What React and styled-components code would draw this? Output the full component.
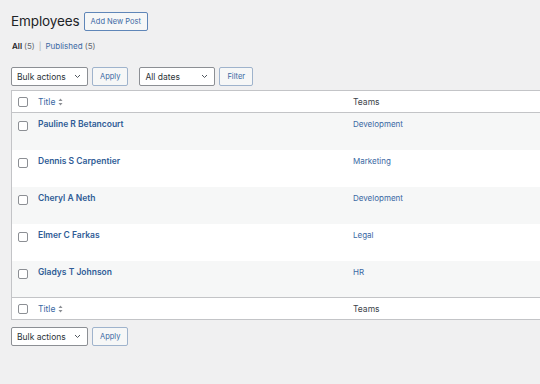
import React from 'react';
import styled, { createGlobalStyle } from 'styled-components';

const GlobalStyle = createGlobalStyle`
  html, body {
    margin: 0;
    padding: 0;
    background: #f0f0f1;
    overflow: hidden;
  }
  body {
    font-family: Inter, "Noto Sans", sans-serif;
    font-size: 9px;
    color: #3c434a;
  }
`;

const Page = styled.div`
  width: 540px;
  height: 384px;
  padding: 11px 0 0 11px;
  box-sizing: border-box;
`;

const HeaderRow = styled.div`
  display: flex;
  align-items: center;
  gap: 4px;
`;

const Heading = styled.h1`
  margin: 0;
  font-size: 13.5px;
  font-weight: 400;
  letter-spacing: -0.1px;
  color: #1d2327;
  line-height: 20px;
`;

const OutlineButton = styled.button`
  font-family: inherit;
  font-size: 7.5px;
  height: 19px;
  padding: 0 ${p => (p.$strong ? 6 : 7)}px;
  border: 1px solid ${p => (p.$strong ? '#5f86b8' : '#9fb3cc')};
  border-radius: 2px;
  background: #f6f7f7;
  color: #3a68a3;
  cursor: pointer;
  box-sizing: border-box;
`;

const Subsub = styled.ul`
  list-style: none;
  margin: 10px 0 0 1px;
  padding: 0;
  display: flex;
  gap: 4px;
  font-size: 8px;
  color: #646970;
`;

const SubItem = styled.li`
  color: ${p => (p.$current ? '#1d2327' : '#3a68a3')};
  font-weight: ${p => (p.$current ? 600 : 400)};
  span {
    color: #646970;
    font-weight: 400;
  }
`;

const Sep = styled.li`
  color: #a7aaad;
`;

const Toolbar = styled.div`
  display: flex;
  align-items: center;
  margin: ${p => (p.$top ? '16px 0 4px' : '7px 0 0')};
`;

const Group = styled.div`
  display: flex;
  align-items: center;
  gap: 4px;
  margin-right: 11px;
`;

const Select = styled.div`
  width: ${p => p.$w}px;
  height: 19px;
  box-sizing: border-box;
  border: 1px solid #8c8f94;
  border-radius: 2px;
  background: #fff;
  display: flex;
  align-items: center;
  justify-content: space-between;
  padding: 0 6px 0 5px;
  font-size: 8.5px;
  color: #2c3338;
`;

const Table = styled.table`
  width: 533px;
  border-collapse: collapse;
  border: 1px solid #c3c4c7;
  background: #fff;
  table-layout: fixed;
`;

const Row = styled.tr`
  background: ${p => (p.$alt ? '#f6f7f7' : '#fff')};
`;

const HeadCell = styled.th`
  text-align: left;
  font-weight: 400;
  height: 22px;
  padding: 0 6px;
  box-sizing: border-box;
  font-size: 8.5px;
  color: ${p => (p.$link ? '#3a68a3' : '#3c434a')};
  border-${p => (p.$foot ? 'top' : 'bottom')}: 1px solid #c3c4c7;
  vertical-align: middle;
`;

const Cell = styled.td`
  height: 37px;
  padding: 6px 6px 0;
  box-sizing: border-box;
  vertical-align: top;
  font-size: ${p => (p.$bold ? 8.5 : 8)}px;
  color: ${p => (p.$bold ? '#2f5c96' : '#3a68a3')};
  font-weight: ${p => (p.$bold ? 600 : 400)};
`;

const CheckCell = styled.td`
  width: 14px;
  padding: ${p => (p.$head ? '0' : '8px')} 0 0 6px;
  vertical-align: ${p => (p.$head ? 'middle' : 'top')};
  border-${p => (p.$foot ? 'top' : 'bottom')}: ${p => (p.$head ? '1px solid #c3c4c7' : '0')};
`;

const Check = styled.span`
  display: block;
  width: 10px;
  height: 10px;
  box-sizing: border-box;
  border: 1px solid #8c8f94;
  border-radius: 2px;
  background: #fff;
`;

const SortLabel = styled.span`
  display: inline-flex;
  align-items: center;
  gap: 3px;
`;

const Chevron = () => (
  <svg width="7" height="5" viewBox="0 0 7 5">
    <path d="M1 1l2.5 2.5L6 1" fill="none" stroke="#50575e" strokeWidth="1" />
  </svg>
);

const SortIcon = () => (
  <svg width="5" height="8" viewBox="0 0 5 8">
    <path d="M2.5 0.5L4.5 3H0.5z" fill="#8c8f94" />
    <path d="M2.5 7.5L4.5 5H0.5z" fill="#8c8f94" />
  </svg>
);

const employees = [
  ['Pauline R Betancourt', 'Development'],
  ['Dennis S Carpentier', 'Marketing'],
  ['Cheryl A Neth', 'Development'],
  ['Elmer C Farkas', 'Legal'],
  ['Gladys T Johnson', 'HR'],
];

const HeadRow = ({ foot }) => (
  <tr>
    <CheckCell as={foot ? 'td' : 'th'} $head $foot={foot}><Check /></CheckCell>
    <HeadCell $link $foot={foot} style={{ width: 315 }}>
      <SortLabel>Title <SortIcon /></SortLabel>
    </HeadCell>
    <HeadCell $foot={foot}>Teams</HeadCell>
  </tr>
);

const BulkBar = ({ top }) => (
  <Toolbar $top={top}>
    <Group>
      <Select $w={77}>Bulk actions <Chevron /></Select>
      <OutlineButton>Apply</OutlineButton>
    </Group>
    {top && (
      <Group>
        <Select $w={76}>All dates <Chevron /></Select>
        <OutlineButton>Filter</OutlineButton>
      </Group>
    )}
  </Toolbar>
);

export default function App() {
  return (
    <Page>
      <GlobalStyle />
      <HeaderRow>
        <Heading>Employees</Heading>
        <OutlineButton $strong>Add New Post</OutlineButton>
      </HeaderRow>
      <Subsub>
        <SubItem $current>All <span>(5)</span></SubItem>
        <Sep>|</Sep>
        <SubItem>Published <span>(5)</span></SubItem>
      </Subsub>
      <BulkBar top />
      <Table>
        <thead><HeadRow /></thead>
        <tbody>
          {employees.map(([name, team], i) => (
            <Row key={name} $alt={i % 2 === 0}>
              <CheckCell><Check /></CheckCell>
              <Cell $bold>{name}</Cell>
              <Cell>{team}</Cell>
            </Row>
          ))}
        </tbody>
        <tfoot><HeadRow foot /></tfoot>
      </Table>
      <BulkBar />
    </Page>
  );
}
